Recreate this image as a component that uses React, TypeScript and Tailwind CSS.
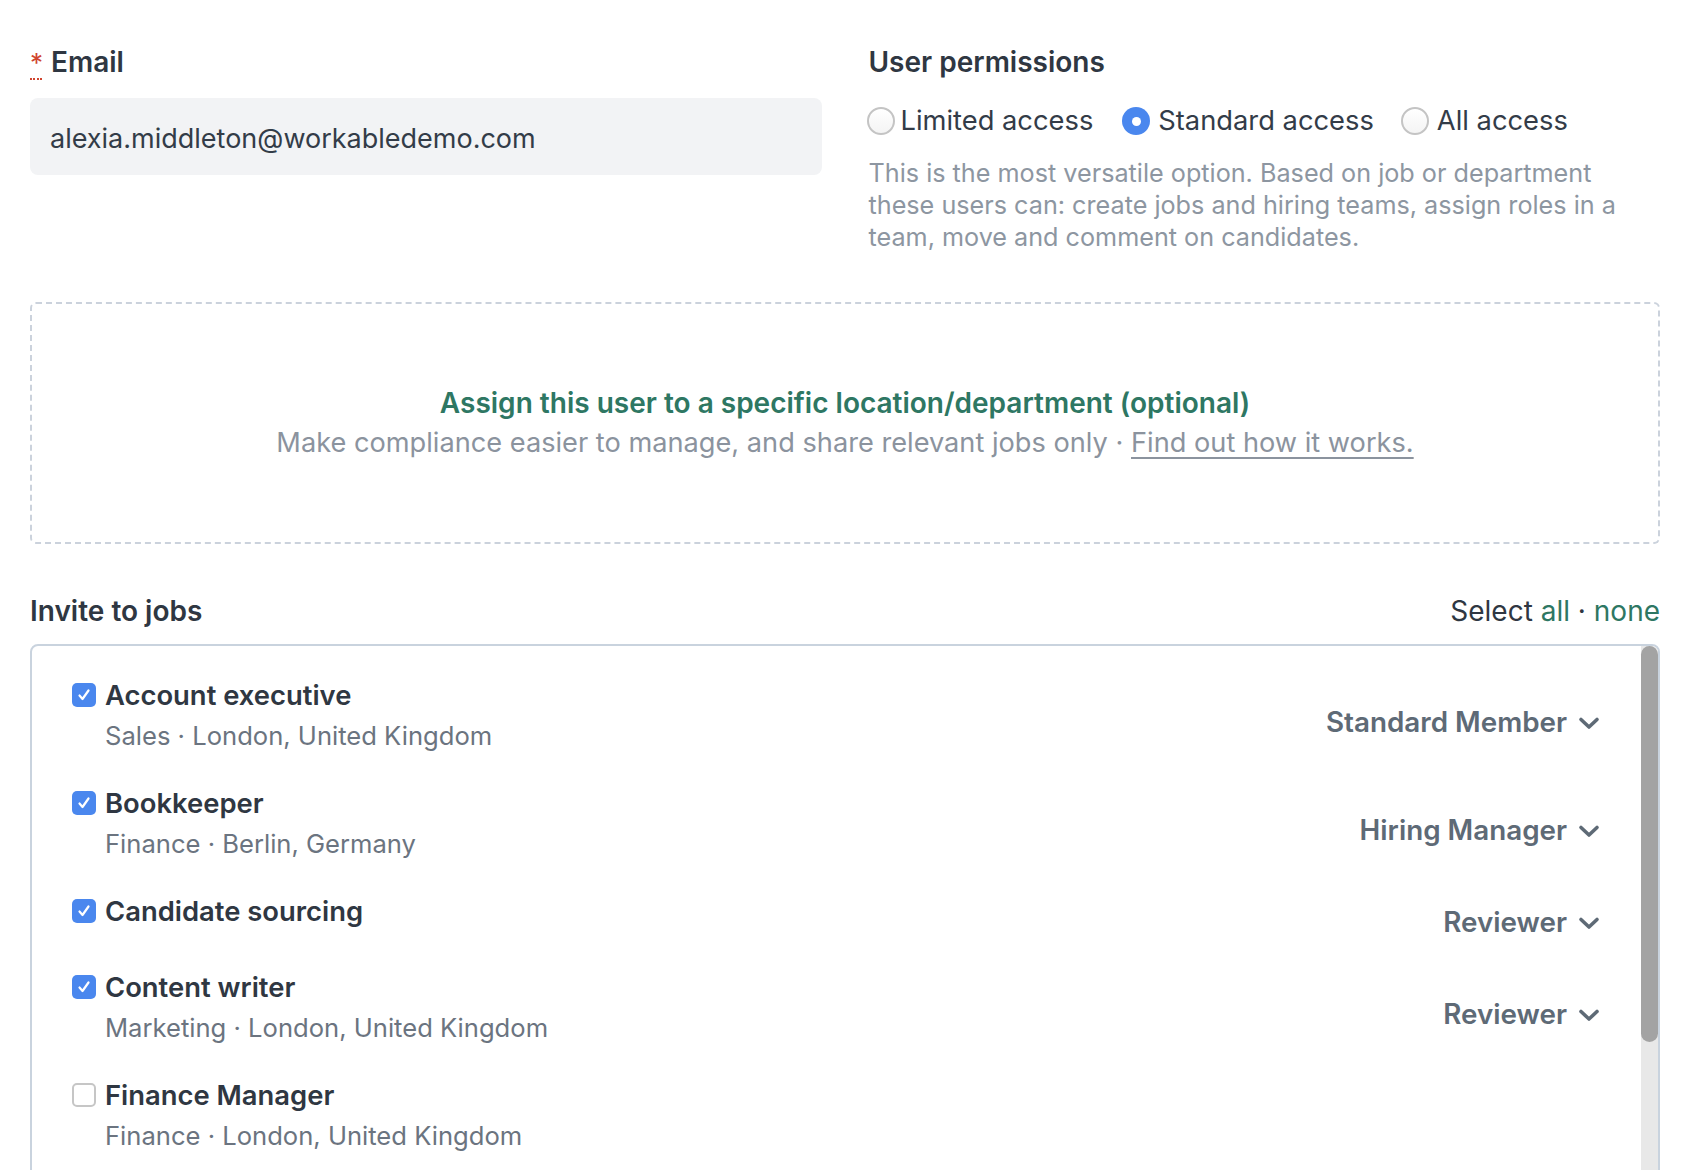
import React from "react";

const font = { fontFamily: "Inter, 'Noto Sans', sans-serif" };

function Radio({ checked }: { checked?: boolean }) {
  if (checked)
    return (
      <span className="flex h-[28px] w-[28px] items-center justify-center rounded-full bg-[#4a87ee]">
        <span className="h-[9px] w-[9px] rounded-full bg-white" />
      </span>
    );
  return (
    <span className="block h-[28px] w-[28px] rounded-full border-2 border-[#c4c4c4] bg-gradient-to-b from-white to-[#f4f4f4]" />
  );
}

function Checkbox({ checked }: { checked?: boolean }) {
  if (checked)
    return (
      <span className="flex h-[24px] w-[24px] shrink-0 items-center justify-center rounded-[5px] bg-[#4a87ee]">
        <svg width="16" height="16" viewBox="0 0 16 16" fill="none">
          <path d="M3.5 8.5 L6.5 12 L12.5 3.5" stroke="white" strokeWidth="2.2" strokeLinecap="round" strokeLinejoin="round" />
        </svg>
      </span>
    );
  return <span className="block h-[24px] w-[24px] shrink-0 rounded-[5px] border-2 border-[#c6c6c6] bg-white" />;
}

function Chevron() {
  return (
    <svg width="22" height="14" viewBox="0 0 22 14" fill="none">
      <path d="M3 3.5 L11 11 L19 3.5" stroke="#5e6a76" strokeWidth="3.6" strokeLinecap="round" strokeLinejoin="round" />
    </svg>
  );
}

type Job = { title: string; sub?: string; role?: string; checked: boolean };

const jobs: Job[] = [
  { title: "Account executive", sub: "Sales · London, United Kingdom", role: "Standard Member", checked: true },
  { title: "Bookkeeper", sub: "Finance · Berlin, Germany", role: "Hiring Manager", checked: true },
  { title: "Candidate sourcing", role: "Reviewer", checked: true },
  { title: "Content writer", sub: "Marketing · London, United Kingdom", role: "Reviewer", checked: true },
  { title: "Finance Manager", sub: "Finance · London, United Kingdom", checked: false },
];

export default function App() {
  return (
    <div style={font} className="h-[1170px] w-[1692px] overflow-hidden bg-white pl-[30px] pr-[32px] pt-[42px] text-[#2f3742]">
      <div className="grid grid-cols-2 gap-x-[47px]">
        <div>
          <div className="flex h-[40px] items-center text-[28px] font-semibold">
            <span className="relative mr-[8px] text-[26px] font-normal text-[#d0452f]">
              *
              <span className="absolute bottom-[2px] left-0 h-[2px] w-[12px] border-b-2 border-dotted border-[#d0452f]" />
            </span>
            Email
          </div>
          <div className="mt-[16px] flex h-[77px] items-center rounded-[8px] bg-[#f2f3f5] px-[20px] pt-[5px] text-[27px] text-[#333c48]">
            alexia.middleton@workabledemo.com
          </div>
        </div>
        <div>
          <div className="flex h-[40px] items-center text-[28px] font-semibold">User permissions</div>
          <div className="mt-[19px] flex h-[40px] items-center text-[27.3px] text-[#333c48]">
            <span className="-ml-[2px] flex items-center gap-[6px]">
              <Radio />
              Limited access
            </span>
            <span className="ml-[29px] flex items-center gap-[8px]">
              <Radio checked />
              Standard access
            </span>
            <span className="ml-[27px] flex items-center gap-[8px]">
              <Radio />
              All access
            </span>
          </div>
          <p className="mt-[16px] text-[25.2px] leading-[32px] text-[#8d96a1]">
            This is the most versatile option. Based on job or department these users can: create jobs and hiring teams, assign roles in a team, move and comment on candidates.
          </p>
        </div>
      </div>

      <div className="mt-[49px] flex h-[242px] flex-col items-center justify-center rounded-[6px] border-2 border-dashed border-[#cbd2dc]">
        <div className="text-[28px] font-semibold leading-[40px] text-[#2e7763]">
          Assign this user to a specific location/department (optional)
        </div>
        <div className="text-[27.2px] leading-[40px] text-[#8b939e]">
          Make compliance easier to manage, and share relevant jobs only ·{" "}
          <span className="underline decoration-[2px] underline-offset-[5px]">Find out how it works.</span>
        </div>
      </div>

      <div className="mt-[47px] flex h-[40px] items-center justify-between">
        <div className="text-[28px] font-semibold">Invite to jobs</div>
        <div className="text-[28px] text-[#2f3742]">
          Select <span className="text-[#2e7763]">all</span> · <span className="text-[#2e7763]">none</span>
        </div>
      </div>

      <div className="mt-[13px] flex h-[600px] overflow-hidden rounded-t-[8px] border-2 border-[#c9d3de]">
        <div className="flex-1 pl-[40px] pr-[41px] pt-[23px]">
          {jobs.map((j) => (
            <div key={j.title} className={`flex items-center justify-between ${j.sub ? "h-[108px]" : "h-[76px]"}`}>
              <div className="flex h-full items-start gap-[9px] self-start pt-[7px]">
                <div className="flex h-[38px] items-center">
                  <Checkbox checked={j.checked} />
                </div>
                <div>
                  <div className="text-[27.4px] font-semibold leading-[38px] text-[#2f3742]">{j.title}</div>
                  {j.sub && <div className="mt-[3px] text-[25.6px] leading-[38px] text-[#6b7480]">{j.sub}</div>}
                </div>
              </div>
              {j.role && (
                <div className="flex items-center gap-[11px] text-[27.8px] font-semibold text-[#5e6a76]">
                  {j.role}
                  <Chevron />
                </div>
              )}
            </div>
          ))}
        </div>
        <div className="flex w-[17px] flex-col bg-[#e8e8e8]">
          <div className="h-[396px] rounded-b-[9px] rounded-t-[9px] bg-[#a3a3a3]" />
        </div>
      </div>
    </div>
  );
}
